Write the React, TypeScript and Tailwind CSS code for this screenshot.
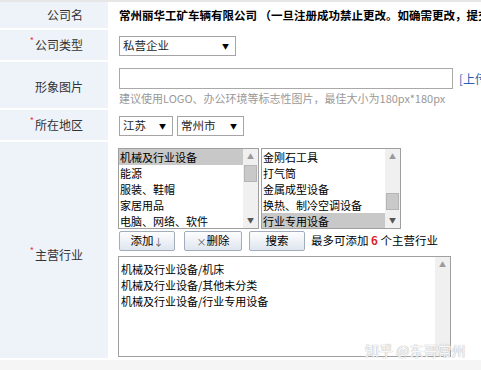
import React from 'react';

const font = "font-['SimSun','Noto_Sans_CJK_SC',sans-serif]";

function Req() {
    return <span className="text-[#e33] text-[9px] relative -top-[4px] mr-[1px]">*</span>;
}

function Label({ children, req, className = '' }: { children: React.ReactNode; req?: boolean; className?: string }) {
    return (
        <div className={`bg-[#eef2f9] border-b-2 border-white flex items-center justify-end pr-[25px] text-[12px] text-[#333] ${className}`}>
            {req && <Req />}
            {children}
        </div>
    );
}

function Select({ text, w }: { text: string; w: string }) {
    return (
        <div className={`${w} h-[20px] border border-[#a5a5a5] bg-white flex items-center justify-between pl-[3px] pr-[6px] text-[11.5px] text-[#222] whitespace-nowrap`}>
            <span>{text}</span>
            <span className="text-[7px] text-black">▼</span>
        </div>
    );
}

function ScrollBar({ thumbTop, thumb = true }: { thumbTop: number; thumb?: boolean }) {
    return (
        <div className="w-[15px] bg-[#f0f0f0] relative flex flex-col items-center justify-between py-[2px]">
            <span className="text-[7px] text-[#9a9a9a] leading-none mt-[2px]">▲</span>
            {thumb && (
                <div className="absolute left-[1px] right-[1px] h-[17px] bg-[#c9c9c9] border border-[#b5b5b5]" style={{ top: thumbTop }} />
            )}
            {thumb && <span className="text-[7px] text-[#555] leading-none mb-[2px]">▼</span>}
        </div>
    );
}

function ListBox({ items, selected, thumbTop, w }: { items: string[]; selected: number; thumbTop: number; w: string }) {
    return (
        <div className={`${w} h-[81px] border border-[#9f9f9f] bg-white flex`}>
            <div className="flex-1 overflow-hidden">
                {items.map((it, i) => (
                    <div key={it} className={`h-[16px] leading-[16px] pl-[1px] text-[11px] text-black whitespace-nowrap ${i === selected ? 'bg-[#c8c8c8]' : ''}`}>
                        {it}
                    </div>
                ))}
            </div>
            <ScrollBar thumbTop={thumbTop} />
        </div>
    );
}

function Btn({ children, w }: { children: React.ReactNode; w: string }) {
    return (
        <div className={`${w} h-[20px] border border-[#a3acba] rounded-[2px] bg-gradient-to-b from-[#fdfdfe] to-[#dfe6ef] flex items-center justify-center text-[11.5px] text-black`}>
            {children}
        </div>
    );
}

export default function App() {
    return (
        <div className={`relative w-[481px] h-[370px] bg-[#f5f5f5] overflow-hidden ${font}`}>
            <div className="h-[2px] bg-[#e6e6e6]" />
            <div className="grid grid-cols-[108px_373px] bg-white">
                {/* 公司名 */}
                <Label className="h-[28px]">公司名</Label>
                <div className="h-[28px] flex items-center pl-[9px] border-l-2 border-white whitespace-nowrap overflow-hidden text-[11.5px] font-bold text-black">
                    常州丽华工矿车辆有限公司 （一旦注册成功禁止更改。如确需更改，提交相关资料
                </div>

                {/* 公司类型 */}
                <Label req className="h-[32px]">公司类型</Label>
                <div className="h-[32px] flex items-center pl-[9px] border-l-2 border-white">
                    <Select text="私营企业" w="w-[117px]" />
                </div>

                {/* 形象图片 */}
                <Label className="h-[48px] pt-[4px]">形象图片</Label>
                <div className="h-[48px] pl-[9px] border-l-2 border-white pt-[6px] overflow-hidden">
                    <div className="flex items-center gap-[6px] whitespace-nowrap">
                        <div className="w-[334px] h-[21px] border border-[#a9a9a9] bg-white shrink-0" />
                        <span className="text-[12px] text-[#2a5fb4]">[上传</span>
                    </div>
                    <div className="text-[11px] text-[#999] mt-[1px] whitespace-nowrap">
                        建议使用LOGO、办公环境等标志性图片，最佳大小为180px*180px
                    </div>
                </div>

                {/* 所在地区 */}
                <Label req className="h-[32px]">所在地区</Label>
                <div className="h-[32px] flex items-center gap-[4px] pl-[9px] border-l-2 border-white">
                    <Select text="江苏" w="w-[54px]" />
                    <Select text="常州市" w="w-[67px]" />
                </div>

                {/* 主营行业 */}
                <Label req className="h-[218px] pt-[10px]">主营行业</Label>
                <div className="h-[218px] pl-[8px] pt-[6px] border-l-2 border-white">
                    <div className="flex gap-[2px]">
                        <ListBox
                            w="w-[141px]"
                            items={['机械及行业设备', '能源', '服装、鞋帽', '家居用品', '电脑、网络、软件']}
                            selected={0}
                            thumbTop={16}
                        />
                        <ListBox
                            w="w-[140px]"
                            items={['金刚石工具', '打气筒', '金属成型设备', '换热、制冷空调设备', '行业专用设备']}
                            selected={4}
                            thumbTop={44}
                        />
                    </div>
                    <div className="flex items-center mt-[2px] pl-[1px]">
                        <Btn w="w-[56px]">添加<span className="text-[10px] text-[#666]">↓</span></Btn>
                        <div className="w-[9px]" />
                        <Btn w="w-[58px]"><span className="text-[10px] text-[#666]">×</span>删除</Btn>
                        <div className="w-[7px]" />
                        <Btn w="w-[56px]">搜索</Btn>
                        <span className="ml-[6px] text-[11.5px] text-black whitespace-nowrap">
                            最多可添加 <b className="text-[#d22]">6</b> 个主营行业
                        </span>
                    </div>
                    <div className="relative w-[333px] h-[101px] border border-[#a0a0a0] bg-white mt-[5px] flex">
                        <div className="flex-1 pt-[4px] pl-[2px] text-[11px] text-black leading-[16px]">
                            <div>机械及行业设备/机床</div>
                            <div>机械及行业设备/其他未分类</div>
                            <div>机械及行业设备/行业专用设备</div>
                        </div>
                        <ScrollBar thumbTop={0} thumb={false} />
                    </div>
                </div>
            </div>
            <div className="absolute left-[365px] top-[340px] text-[14px] text-white/90 [text-shadow:0_0_1px_#b4b4b4,0_0_1px_#b4b4b4] whitespace-nowrap font-['Noto_Sans_CJK_SC',sans-serif]">
                知乎 @东哥常州
            </div>
        </div>
    );
}
